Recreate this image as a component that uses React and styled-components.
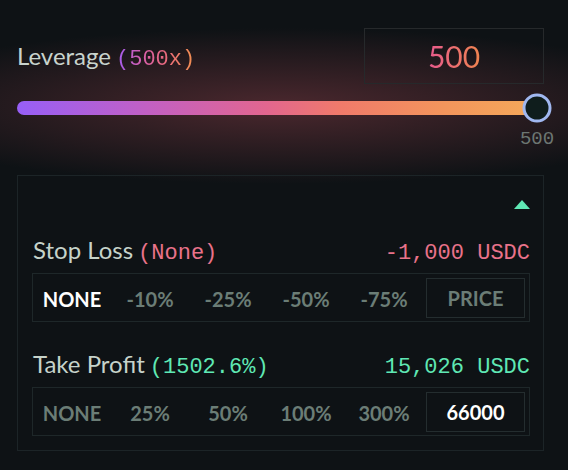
import React from 'react'
import styled, { createGlobalStyle } from 'styled-components'

const GlobalStyle = createGlobalStyle`
  html, body {
    margin: 0;
    padding: 0;
    background: #0e1215;
  }
  body {
    font-family: 'Lato', 'Noto Sans', sans-serif;
  }
`

const Page = styled.div`
  width: 568px;
  height: 470px;
  box-sizing: border-box;
  padding: 28px 24px 0 17px;
  background:
    radial-gradient(ellipse 430px 78px at 280px 106px, rgba(90, 45, 52, 0.8), rgba(14, 18, 21, 0) 100%),
    #0e1215;
  overflow: hidden;
`

const Header = styled.div`
  display: flex;
  align-items: center;
  justify-content: space-between;
  height: 56px;
`

const Title = styled.div`
  font-size: 24px;
  color: #c8d3cd;
  display: flex;
  align-items: baseline;
`

const Mono = styled.span`
  font-family: 'Liberation Mono', 'DejaVu Sans Mono', monospace;
  font-size: 22px;
  color: ${(p) => p.color || '#6c7672'};
  margin-left: ${(p) => p.gap || 0}px;
`

const GradientMono = styled(Mono)`
  background: linear-gradient(90deg, #a15cf2 0%, #d85fa8 35%, #ec6b7a 65%, #f2924f 100%);
  -webkit-background-clip: text;
  background-clip: text;
  color: transparent;
`

const ValueBox = styled.div`
  width: 180px;
  height: 56px;
  box-sizing: border-box;
  border: 1px solid #26292b;
  display: flex;
  align-items: center;
  justify-content: center;
`

const BigValue = styled.span`
  font-size: 30px;
  background: linear-gradient(90deg, #e85a8e, #f08450);
  -webkit-background-clip: text;
  background-clip: text;
  color: transparent;
`

const Slider = styled.div`
  position: relative;
  width: 520px;
  height: 14px;
  margin-top: 17px;
`

const Track = styled.div`
  height: 14px;
  border-radius: 7px;
  background: linear-gradient(90deg, #975ff7 0%, #c260c4 25%, #e2668f 48%, #f07a6b 62%, #f3955c 82%, #f4a95a 100%);
`

const Thumb = styled.div`
  position: absolute;
  left: 100%;
  top: 50%;
  width: 29px;
  height: 29px;
  box-sizing: border-box;
  transform: translate(-50%, -50%);
  border-radius: 50%;
  border: 3px solid #a0b8f0;
  background: #0f1d1c;
`

const ThumbLabel = styled.div`
  position: absolute;
  left: 100%;
  top: 27px;
  transform: translateX(-50%);
  font-family: 'Liberation Mono', 'DejaVu Sans Mono', monospace;
  font-size: 19px;
  color: #6c7672;
`

const Panel = styled.div`
  margin-top: 60px;
  width: 527px;
  box-sizing: border-box;
  border: 1px solid #1c2427;
  padding: 0 13px 14px 14px;
`

const Toggle = styled.div`
  display: flex;
  justify-content: flex-end;
  padding-top: 24px;
`

const Caret = styled.div`
  width: 0;
  height: 0;
  border-left: 8px solid transparent;
  border-right: 8px solid transparent;
  border-bottom: 9px solid #5fe8b4;
`

const Section = styled.div`
  margin-top: ${(p) => p.top}px;
`

const SectionHead = styled.div`
  display: flex;
  align-items: baseline;
  justify-content: space-between;
  padding-left: 1px;
  height: 29px;
`

const SectionTitle = styled.div`
  font-size: 24px;
  color: #c6d3ca;
  display: flex;
  align-items: baseline;
`

const Options = styled.div`
  margin-top: 9px;
  height: 49px;
  box-sizing: border-box;
  border: 1px solid #1e2729;
  display: flex;
  align-items: center;
`

const Option = styled.div`
  flex: 1;
  text-align: center;
  font-size: 20px;
  font-weight: 700;
  padding-top: 2px;
  color: ${(p) => (p.active ? '#ffffff' : '#6b7d76')};
`

const Field = styled.div`
  width: 99px;
  height: 40px;
  box-sizing: border-box;
  margin: 0 4px 0 3px;
  border: 1px solid #242d2f;
  display: flex;
  align-items: center;
  justify-content: center;
  font-size: 20px;
  font-weight: 700;
  padding-top: 1px;
  color: ${(p) => (p.filled ? '#ffffff' : '#6b7d76')};
`

const pink = '#e9728a'
const green = '#5fe8b4'

const stopOptions = ['NONE', '-10%', '-25%', '-50%', '-75%']
const profitOptions = ['NONE', '25%', '50%', '100%', '300%']

export default function App() {
  return (
    <Page>
      <GlobalStyle />
      <Header>
        <Title>
          Leverage
          <GradientMono gap={5}>(500x)</GradientMono>
        </Title>
        <ValueBox>
          <BigValue>500</BigValue>
        </ValueBox>
      </Header>

      <Slider>
        <Track />
        <Thumb />
        <ThumbLabel>500</ThumbLabel>
      </Slider>

      <Panel>
        <Toggle>
          <Caret />
        </Toggle>

        <Section top={26}>
          <SectionHead>
            <SectionTitle>
              Stop Loss
              <Mono gap={5} color={pink}>(None)</Mono>
            </SectionTitle>
            <Mono color={pink}>-1,000 USDC</Mono>
          </SectionHead>
          <Options>
            {stopOptions.map((o, i) => (
              <Option key={o} active={i === 0}>{o}</Option>
            ))}
            <Field>PRICE</Field>
          </Options>
        </Section>

        <Section top={27}>
          <SectionHead>
            <SectionTitle>
              Take Profit
              <Mono gap={5} color={green}>(1502.6%)</Mono>
            </SectionTitle>
            <Mono color={green}>15,026 USDC</Mono>
          </SectionHead>
          <Options>
            {profitOptions.map((o) => (
              <Option key={o}>{o}</Option>
            ))}
            <Field filled>66000</Field>
          </Options>
        </Section>
      </Panel>
    </Page>
  )
}
